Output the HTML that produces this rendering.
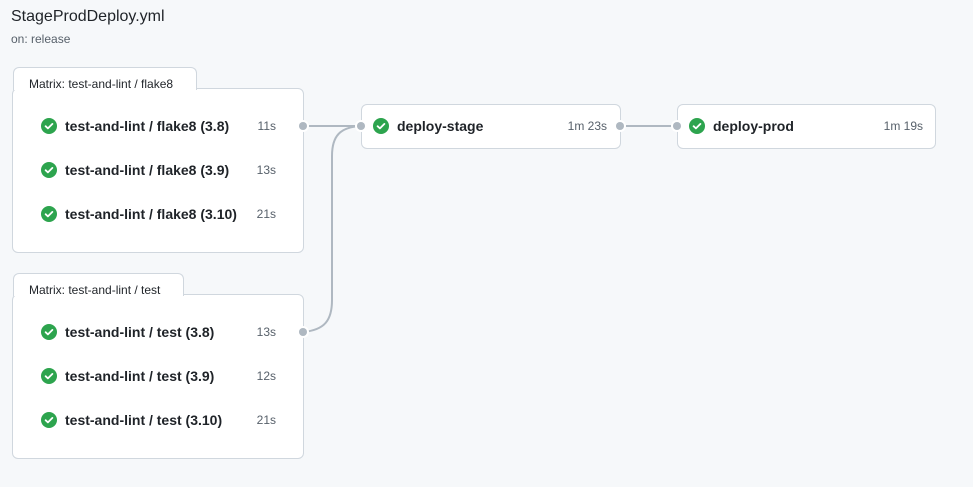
<!DOCTYPE html><html><head><style>
body{margin:0;width:973px;height:487px;background:#f6f8fa;font-family:"Liberation Sans",sans-serif;color:#1f2328;position:relative;overflow:hidden}
.a{position:absolute}
.box{position:absolute;background:#fff;border:1px solid #d0d7de;border-radius:6px;box-sizing:border-box}
.tab{position:absolute;background:#fff;border:1px solid #d0d7de;border-bottom:none;border-radius:6px 6px 0 0;box-sizing:border-box;font-size:12px;padding:9px 0 0 15px;z-index:2;height:23px}
.row{position:absolute;left:41px;font-size:14px;font-weight:bold;color:#1f2328;height:16px;line-height:16px}
.row svg,.job svg{position:absolute;left:0;top:0}
.row span.t{position:absolute;left:24px;white-space:nowrap}
.tm{position:absolute;font-size:12px;color:#57606a;font-weight:normal;text-align:right;white-space:nowrap}
.dot{position:absolute;width:8px;height:8px;border-radius:50%;background:#afb8c1;box-shadow:0 0 0 2px #fff;z-index:3}
</style></head><body>
<div class="a" style="left:11px;top:8px;font-size:16px">StageProdDeploy.yml</div>
<div class="a" style="left:11px;top:32px;font-size:12px;color:#57606a">on: release</div>

<svg class="a" style="left:0;top:0;z-index:1" width="973" height="487"><g fill="none" stroke="#afb8c1" stroke-width="2"><path d="M303 126H361"/><path d="M303 332C325 330 332 320 332 300V156C332 136 340 127 361 126"/><path d="M620 126H677"/></g></svg>

<div class="tab" style="left:13px;top:67px;width:184px;height:23px">Matrix: test-and-lint / flake8</div>
<div class="box" style="left:12px;top:88px;width:292px;height:165px"></div>
<div class="tab" style="left:13px;top:273px;width:171px;height:23px">Matrix: test-and-lint / test</div>
<div class="box" style="left:12px;top:294px;width:292px;height:165px"></div>

<div class="box" style="left:361px;top:104px;width:260px;height:45px"></div>
<div class="box" style="left:677px;top:104px;width:259px;height:45px"></div>

<div class="dot" style="left:299px;top:122px"></div>
<div class="dot" style="left:357px;top:122px"></div>
<div class="dot" style="left:616px;top:122px"></div>
<div class="dot" style="left:673px;top:122px"></div>
<div class="dot" style="left:299px;top:328px"></div>

<svg width="0" height="0" style="position:absolute"><defs><symbol id="ok" viewBox="0 0 16 16"><circle cx="8" cy="8" r="8" fill="#2da44e"/><path d="M4.6 8.2l2.3 2.2 4.5-4.5" fill="none" stroke="#fff" stroke-width="1.8" stroke-linecap="round" stroke-linejoin="round"/></symbol></defs></svg>

<div class="row" style="top:118px;z-index:3"><svg width="16" height="16"><use href="#ok"/></svg><span class="t">test-and-lint / flake8 (3.8)</span><span class="tm" style="left:200px;width:35px">11s</span></div>
<div class="row" style="top:162px;z-index:3"><svg width="16" height="16"><use href="#ok"/></svg><span class="t">test-and-lint / flake8 (3.9)</span><span class="tm" style="left:200px;width:35px">13s</span></div>
<div class="row" style="top:206px;z-index:3"><svg width="16" height="16"><use href="#ok"/></svg><span class="t">test-and-lint / flake8 (3.10)</span><span class="tm" style="left:200px;width:35px">21s</span></div>
<div class="row" style="top:324px;z-index:3"><svg width="16" height="16"><use href="#ok"/></svg><span class="t">test-and-lint / test (3.8)</span><span class="tm" style="left:200px;width:35px">13s</span></div>
<div class="row" style="top:368px;z-index:3"><svg width="16" height="16"><use href="#ok"/></svg><span class="t">test-and-lint / test (3.9)</span><span class="tm" style="left:200px;width:35px">12s</span></div>
<div class="row" style="top:412px;z-index:3"><svg width="16" height="16"><use href="#ok"/></svg><span class="t">test-and-lint / test (3.10)</span><span class="tm" style="left:200px;width:35px">21s</span></div>

<div class="row" style="left:373px;top:118px;z-index:3"><svg width="16" height="16"><use href="#ok"/></svg><span class="t">deploy-stage</span><span class="tm" style="left:170px;width:64px">1m 23s</span></div>
<div class="row" style="left:689px;top:118px;z-index:3"><svg width="16" height="16"><use href="#ok"/></svg><span class="t">deploy-prod</span><span class="tm" style="left:170px;width:64px">1m 19s</span></div>
</body></html>
